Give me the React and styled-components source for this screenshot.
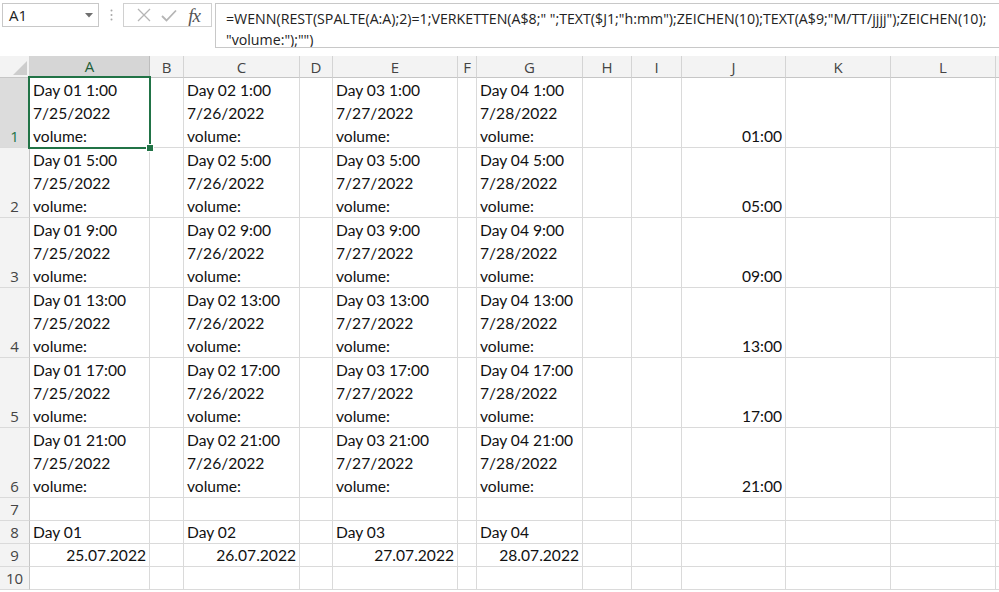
import React from "react";
import styled, { createGlobalStyle } from "styled-components";

const GlobalStyle = createGlobalStyle`
  html, body {
    margin: 0;
    padding: 0;
    background: #fff;
  }
  body {
    width: 999px;
    height: 592px;
    overflow: hidden;
  }
`;

const Window = styled.div`
  display: flex;
  flex-direction: column;
  width: 999px;
  height: 592px;
  overflow: hidden;
  background: #fff;
`;

const FormulaBar = styled.div`
  display: flex;
  align-items: flex-start;
  height: 56px;
  padding-top: 3px;
  padding-left: 2px;
  box-sizing: border-box;
`;

const NameBox = styled.div`
  display: flex;
  align-items: center;
  justify-content: space-between;
  width: 97px;
  height: 24px;
  box-sizing: border-box;
  border: 1px solid #c8c8c8;
  padding: 0 5px 0 6px;
  font-family: "Open Sans", sans-serif;
  font-size: 15px;
  color: #222;
`;

const Dots = styled.div`
  width: 24px;
  height: 24px;
  display: flex;
  align-items: center;
  justify-content: center;
`;

const ButtonGroup = styled.div`
  display: flex;
  align-items: center;
  width: 89px;
  height: 24px;
  box-sizing: border-box;
  border: 1px solid #d0d0d0;
  padding: 0 6px 0 8px;
`;

const IconSlot = styled.div`
  width: ${(p) => p.w}px;
  display: flex;
  align-items: center;
  justify-content: center;
`;

const Fx = styled.span`
  font-family: "Liberation Serif", serif;
  font-style: italic;
  font-size: 19px;
  color: #555;
  letter-spacing: -1px;
  line-height: 1;
`;

const FormulaBox = styled.div`
  flex: 1;
  margin-left: 3px;
  height: 45px;
  box-sizing: border-box;
  border: 1px solid #c8c8c8;
  border-right: none;
  padding: 4px 0 0 10px;
  font-family: "Open Sans", sans-serif;
  font-size: 14.2px;
  line-height: 21px;
  color: #222;
  white-space: pre;
  overflow: hidden;
`;

const Sheet = styled.div`
  position: relative;
  display: grid;
  grid-template-columns: ${(p) => p.cols};
  grid-template-rows: 22px repeat(6, 70px) repeat(4, 23px);
`;

const Corner = styled.div`
  background: #f3f3f3;
  border-right: 1px solid #d4d4d4;
  border-bottom: 1px solid #c6c6c6;
  box-sizing: border-box;
  display: flex;
  align-items: flex-end;
  justify-content: flex-end;
  padding: 0 2px 2px 0;
`;

const ColHead = styled.div`
  box-sizing: border-box;
  background: ${(p) => (p.active ? "#d6d6d6" : "#f3f3f3")};
  border-right: 1px solid ${(p) => (p.active ? "#bdbdbd" : "#d4d4d4")};
  border-bottom: ${(p) => (p.active ? "2px solid #217346" : "1px solid #c6c6c6")};
  color: ${(p) => (p.active ? "#1e5d38" : "#444")};
  font-family: "Open Sans", sans-serif;
  font-size: 15px;
  display: flex;
  align-items: center;
  justify-content: center;
  overflow: hidden;
`;

const RowHead = styled.div`
  box-sizing: border-box;
  background: ${(p) => (p.active ? "#dcdcdc" : "#f3f3f3")};
  border-right: 1px solid #c6c6c6;
  border-bottom: 1px solid #dadada;
  color: ${(p) => (p.active ? "#217346" : "#444")};
  font-family: "Open Sans", sans-serif;
  font-size: 15px;
  line-height: 22px;
  display: flex;
  align-items: flex-end;
  justify-content: center;
`;

const Cell = styled.div`
  box-sizing: border-box;
  border-right: 1px solid #dadada;
  border-bottom: 1px solid #dadada;
  display: flex;
  flex-direction: column;
  justify-content: flex-end;
  align-items: ${(p) => (p.right ? "flex-end" : "flex-start")};
  padding: 0 3px;
  font-family: Lato, "Open Sans", sans-serif;
  font-size: 15.6px;
  color: #111;
  white-space: pre;
  min-width: 0;
`;

const Line = styled.span`
  display: block;
  padding-top: 1px;
  line-height: 22px;
`;

const FormulaLine = styled.span`
  display: block;
`;

const Selection = styled.div`
  position: absolute;
  left: 28px;
  top: 20px;
  width: 123px;
  height: 73px;
  box-sizing: border-box;
  border: 2px solid #217346;
  pointer-events: none;
`;

const FillHandle = styled.div`
  position: absolute;
  right: -5px;
  bottom: -5px;
  width: 6px;
  height: 6px;
  background: #217346;
  border: 1px solid #fff;
`;

const columns = [
  { k: "A", w: 120 },
  { k: "B", w: 34 },
  { k: "C", w: 116 },
  { k: "D", w: 33 },
  { k: "E", w: 125 },
  { k: "F", w: 19 },
  { k: "G", w: 106 },
  { k: "H", w: 49 },
  { k: "I", w: 50 },
  { k: "J", w: 104 },
  { k: "K", w: 105 },
  { k: "L", w: 105 },
  { k: "", w: 20 },
];

const days = {
  A: ["01", "7/25/2022", "25.07.2022"],
  C: ["02", "7/26/2022", "26.07.2022"],
  E: ["03", "7/27/2022", "27.07.2022"],
  G: ["04", "7/28/2022", "28.07.2022"],
};
const hours = [1, 5, 9, 13, 17, 21];

function cellContent(row, col) {
  const d = days[col];
  if (row <= 6) {
    const h = hours[row - 1];
    if (d) return { lines: [`Day ${d[0]} ${h}:00`, d[1], "volume:"] };
    if (col === "J") return { lines: [`${String(h).padStart(2, "0")}:00`], right: true };
    return null;
  }
  if (row === 8 && d) return { lines: [`Day ${d[0]}`] };
  if (row === 9 && d) return { lines: [d[2]], right: true };
  return null;
}

const formula1 = '=WENN(REST(SPALTE(A:A);2)=1;VERKETTEN(A$8;" ";TEXT($J1;"h:mm");ZEICHEN(10);TEXT(A$9;"M/TT/jjjj");ZEICHEN(10);';
const formula2 = '"volume:");"")';

export default function App() {
  const template = `30px ${columns.map((c) => c.w + "px").join(" ")}`;
  const rows = [1, 2, 3, 4, 5, 6, 7, 8, 9, 10];

  return (
    <Window>
      <GlobalStyle />
      <FormulaBar>
        <NameBox>
          <span>A1</span>
          <svg width="8" height="5" viewBox="0 0 8 5">
            <path d="M0 0 L8 0 L4 4.5 Z" fill="#6f6f6f" />
          </svg>
        </NameBox>
        <Dots>
          <svg width="3" height="12" viewBox="0 0 3 12">
            <circle cx="1.5" cy="1.5" r="1" fill="#a8a8a8" />
            <circle cx="1.5" cy="6" r="1" fill="#a8a8a8" />
            <circle cx="1.5" cy="10.5" r="1" fill="#a8a8a8" />
          </svg>
        </Dots>
        <ButtonGroup>
          <IconSlot w={24}>
            <svg width="14" height="14" viewBox="0 0 14 14">
              <path d="M1 1 L13 13 M13 1 L1 13" stroke="#b5b5b5" strokeWidth="1.3" />
            </svg>
          </IconSlot>
          <IconSlot w={28}>
            <svg width="16" height="13" viewBox="0 0 16 13">
              <path d="M1 7 L5.5 11.5 L15 1.5" stroke="#b5b5b5" strokeWidth="1.8" fill="none" />
            </svg>
          </IconSlot>
          <IconSlot w={22}>
            <Fx>fx</Fx>
          </IconSlot>
        </ButtonGroup>
        <FormulaBox>
          <FormulaLine>{formula1}</FormulaLine>
          <FormulaLine>{formula2}</FormulaLine>
        </FormulaBox>
      </FormulaBar>

      <Sheet cols={template}>
        <Corner>
          <svg width="14" height="14" viewBox="0 0 14 14">
            <path d="M14 0 L14 14 L0 14 Z" fill="#cdcdcd" />
          </svg>
        </Corner>
        {columns.map((c, i) => (
          <ColHead key={"h" + i} active={c.k === "A"}>
            {c.k}
          </ColHead>
        ))}
        {rows.map((r) => (
          <React.Fragment key={r}>
            <RowHead active={r === 1}>{r}</RowHead>
            {columns.map((c, i) => {
              const content = cellContent(r, c.k);
              return (
                <Cell key={r + "-" + i} right={content && content.right}>
                  {content && content.lines.map((l, j) => <Line key={j}>{l}</Line>)}
                </Cell>
              );
            })}
          </React.Fragment>
        ))}
        <Selection>
          <FillHandle />
        </Selection>
      </Sheet>
    </Window>
  );
}
